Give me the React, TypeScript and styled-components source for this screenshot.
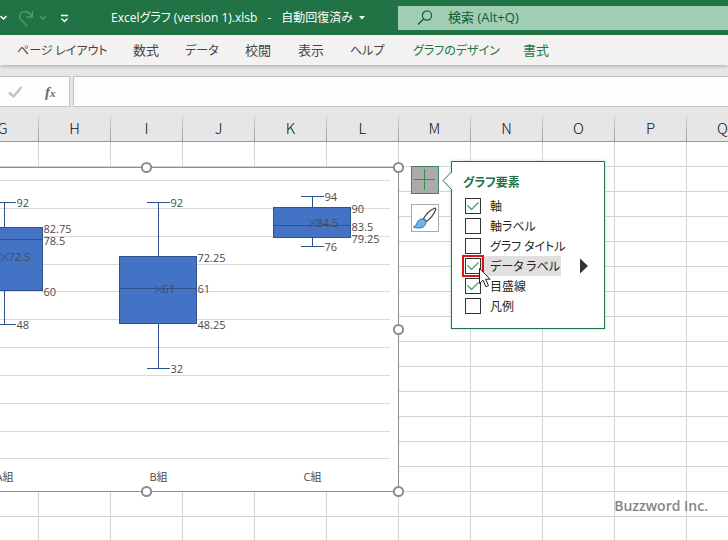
import React from "react";
import styled, { createGlobalStyle } from "styled-components";

const green = "#217346";
const uiFont = `"Open Sans", "Noto Sans CJK JP", sans-serif`;
const jpFont = `"Noto Sans CJK JP", sans-serif`;

const GlobalStyle = createGlobalStyle`
  *, *::before, *::after { box-sizing: border-box; }
  html, body, #root { height: 100%; }
  body { margin: 0; overflow: hidden; background: #fff; font-family: ${uiFont}; font-size: 12px; }
  button, input { font: inherit; }
`;

const Page = styled.div`
  display: flex;
  flex-direction: column;
  min-height: 100vh;
  overflow: hidden;
`;

const TitleBar = styled.header`
  display: grid;
  grid-template-columns: 111px 287px minmax(0, 1fr);
  align-items: center;
  height: 35px;
  background: ${green};
  color: #fff;
`;

const PlainButton = styled.button`
  display: flex;
  align-items: center;
  padding: 0;
  border: 0;
  background: none;
  color: inherit;
  white-space: pre;
`;

const QuickAccess = styled.div`
  display: flex;
  align-items: center;
`;

const FileName = styled(PlainButton)`
  gap: 10px;
  font-size: 12px;
  line-height: 20px;
  span:first-child { font-feature-settings: "palt"; }
  svg { margin-left: -4px; }
`;

const SearchBox = styled.label`
  display: flex;
  align-items: center;
  gap: 14px;
  height: 24px;
  padding-left: 19px;
  background: #a0ceb4;
  color: #0e5c35;
`;

const SearchInput = styled.input`
  flex: 1;
  min-width: 0;
  height: 24px;
  padding: 0 0 2px;
  border: 0;
  outline: 0;
  background: none;
  font-size: 13px;
  color: #0e5c35;
  &::placeholder { color: #0e5c35; opacity: 1; }
`;

const Ribbon = styled.nav`
  position: relative;
  z-index: 1;
  display: grid;
  grid-template-columns: 116px 52px 60px 53px 52px 63px 110px auto;
  justify-content: start;
  align-items: center;
  height: 30px;
  padding-left: 17px;
  background: #f3f2f1;
  box-shadow: 0 3px 3px -1px #bdb9b9;
`;

const Tab = styled(PlainButton)<{ $contextual: boolean; $compact: boolean }>`
  font-family: ${jpFont};
  font-size: ${(p) => (p.$compact ? 12 : 13)}px;
  line-height: 20px;
  font-feature-settings: "palt";
  color: ${(p) => (p.$contextual ? green : "#444")};
`;

const FormulaBar = styled.div`
  display: flex;
  gap: 3px;
  height: 51px;
  padding: 11px 0 9px;
  background: #e6e6e6;
`;

const FormulaTools = styled.div`
  display: flex;
  align-items: center;
  gap: 22px;
  width: 70px;
  padding-left: 8px;
  border: 1px solid #c3c3c3;
  border-left: 0;
  background: #fdfdfd;
`;

const FxButton = styled(PlainButton)`
  font: italic bold 15px/20px "Liberation Serif", serif;
  color: #6a6a6a;
  small { font-size: 11px; line-height: 12px; padding-top: 3px; }
`;

const FormulaInput = styled.input`
  flex: 1;
  min-width: 0;
  border: 1px solid #c3c3c3;
  border-right: 0;
  outline: 0;
  background: #fdfdfd;
`;

const ColumnHeaders = styled.div`
  display: flex;
  height: 26px;
  margin-left: -33px;
  background: #e6e6e6;
  border-bottom: 1px solid #999;
`;

const ColumnHeader = styled.div`
  flex: 0 0 72px;
  border-right: 1px solid;
  border-image: linear-gradient(#d6d6d6, #999) 1;
  text-align: center;
  font: 300 15px/24px ${jpFont};
  color: #111;
`;

const Sheet = styled.main`
  position: relative;
  flex: 1;
  background-color: #fff;
  background-image: linear-gradient(to right, #d4d4d4 1px, transparent 1px),
    linear-gradient(to bottom, #d4d4d4 1px, transparent 1px);
  background-size: 72px 25px;
  background-position: 38px 24px;
`;

const ChartObject = styled.svg`
  position: absolute;
  left: 0;
  top: 18px;
  font-family: ${uiFont};
  font-size: 11px;
`;

const ChartButtons = styled.div`
  position: absolute;
  left: 411px;
  top: 24px;
  display: flex;
  flex-direction: column;
  gap: 10px;
`;

const ChartButton = styled.button<{ $active?: boolean }>`
  display: block;
  width: 28px;
  height: 28px;
  padding: 0;
  border: 1px solid ${(p) => (p.$active ? "#3f8560" : "#ababab")};
  background: ${(p) => (p.$active ? "#ababab" : "#fff")};
  svg { display: block; }
`;

const Flyout = styled.section`
  position: absolute;
  left: 451px;
  top: 19px;
  width: 154px;
  padding: 10px 11px 12px;
  border: 1px solid ${green};
  background: #fff;
  box-shadow: 0 0 3px #b5dcc6;
`;

const FlyoutNotch = styled.svg`
  position: absolute;
  left: -10px;
  top: 9px;
`;

const FlyoutTitle = styled.h2`
  margin: 0 0 4px;
  font: 700 12px/20px ${jpFont};
  font-feature-settings: "palt";
  color: ${green};
`;

const Option = styled.div`
  display: flex;
  align-items: center;
  justify-content: space-between;
  height: 20px;
  padding: 0 5px 0 2px;
`;

const OptionLabel = styled.label<{ $hot?: boolean }>`
  display: flex;
  align-items: center;
  gap: 9px;
  width: 96px;
  height: 20px;
  background: linear-gradient(${(p) => (p.$hot ? "#e1dfe0, #e1dfe0" : "#fff, #fff")}) right / 80px 20px no-repeat;
  font: 12px/20px ${jpFont};
  font-feature-settings: "palt";
  color: #262626;
  white-space: nowrap;
`;

const Box = styled.span<{ $marked?: boolean }>`
  position: relative;
  display: grid;
  width: 16px;
  height: 16px;
  flex: none;
  > * { grid-area: 1 / 1; }
  svg { pointer-events: none; }
  &::after {
    content: "";
    display: ${(p) => (p.$marked ? "block" : "none")};
    position: absolute;
    inset: -3px;
    border: 2px solid #d8151b;
  }
`;

const CheckInput = styled.input`
  appearance: none;
  width: 16px;
  height: 16px;
  margin: 0;
  border: 1px solid #333;
  background: #fdfdfd;
`;

const Pointer = styled.svg`
  position: absolute;
  left: 478px;
  top: 125px;
  pointer-events: none;
`;

const Watermark = styled.footer`
  position: absolute;
  right: 20px;
  bottom: 24px;
  font: 600 14px/20px "Open Sans", sans-serif;
  color: #858585;
`;

const tabs = [
  { label: "ページ レイアウト", compact: true },
  { label: "数式" },
  { label: "データ", compact: true },
  { label: "校閲" },
  { label: "表示" },
  { label: "ヘルプ", compact: true },
  { label: "グラフのデザイン", compact: true, contextual: true },
  { label: "書式", contextual: true },
];
const columns = "GHIJKLMNOPQRSTUVWXYZ".split("");

const options = [
  { label: "軸", checked: true },
  { label: "軸ラベル", checked: false },
  { label: "グラフ タイトル", checked: false },
  { label: "データ ラベル", checked: true, hot: true },
  { label: "目盛線", checked: true },
  { label: "凡例", checked: false },
];

type Plot = {
  name: string;
  x: number;
  max: [number, string];
  q3: [number, string, number];
  median: [number, string, number];
  q1: [number, string, number];
  min: [number, string];
  mean: [number, string];
};

/* Vertical positions are in chart units; the third value is the label's centre. */
const plots: Plot[] = [
  { name: "A組", x: 4, max: [42, "92"], q3: [67, "82.75", 69], median: [79, "78.5", 81], q1: [130, "60", 132], min: [164, "48"], mean: [97, "72.5"] },
  { name: "B組", x: 158, max: [42, "92"], q3: [96, "72.25", 98], median: [128, "61", 129], q1: [163, "48.25", 165], min: [208, "32"], mean: [129, "61"] },
  { name: "C組", x: 312, max: [36, "94"], q3: [47, "90", 49], median: [65, "83.5", 67], q1: [77, "79.25", 79], min: [86, "76"], mean: [63, "84.5"] },
];

const gridLines = [20, 48, 76, 104, 131, 159, 187, 215, 243, 271, 298];
const handles = [[146, 7], [398, 7], [398, 169], [146, 331], [398, 331]];

function BoxPlot({ p }: { p: Plot }) {
  const c = p.x + 0.5;
  return (
    <g>
      <g stroke="#2f528f" fill="none" shapeRendering="crispEdges">
        <path d={`M${c} ${p.max[0]}V${p.q3[0] + 1}M${c} ${p.q1[0] + 1}V${p.min[0]}M${c - 12} ${p.max[0] + 0.5}h23M${c - 12} ${p.min[0] + 0.5}h23`} />
        <rect x={c - 39} y={p.q3[0] + 0.5} width="77" height={p.q1[0] - p.q3[0]} fill="#4472c4" />
        <path d={`M${c - 39} ${p.median[0] + 0.5}h77`} />
      </g>
      <path d={`M${c - 4} ${p.mean[0] - 4}l8 8m0 -8l-8 8`} stroke="#2f528f" fill="none" />
      <g fill="#4a4a4a">
        <text x={c + 12} y={p.max[0] + 5}>{p.max[1]}</text>
        <text x={c + 12} y={p.min[0] + 5}>{p.min[1]}</text>
        <text x={c + 4} y={p.mean[0] + 4}>{p.mean[1]}</text>
        {[p.q3, p.median, p.q1].map(([, label, y]) => (
          <text key={label} x={c + 39} y={y + 4}>{label}</text>
        ))}
        <text x={c} y="321" textAnchor="middle">{p.name}</text>
      </g>
    </g>
  );
}

function Chart() {
  return (
    <ChartObject width="406" height="340" viewBox="0 0 406 340" role="img" aria-label="箱ひげ図">
      <path d="M-1 7.5H398.5V331.5H-1Z" fill="#fff" stroke="#8c8c8c" shapeRendering="crispEdges" />
      {gridLines.map((y) => (
        <path key={y} d={`M0 ${y + 0.5}H390`} stroke="#d9d9d9" shapeRendering="crispEdges" />
      ))}
      {plots.map((p) => <BoxPlot key={p.name} p={p} />)}
      {handles.map(([x, y]) => (
        <circle key={`${x}-${y}`} cx={x + 0.5} cy={y + 0.5} r="4.6" fill="#fff" stroke="#8c8c8c" strokeWidth="2" />
      ))}
    </ChartObject>
  );
}

export default function App() {
  return (
    <>
      <GlobalStyle />
      <Page>
        <TitleBar>
          <QuickAccess>
            <PlainButton aria-label="元に戻す">
              <svg width="17" height="20" fill="none" stroke="#fff" strokeWidth="1.5">
                <path d="M0.5 8l3 3l3 -3" />
              </svg>
            </PlainButton>
            <PlainButton aria-label="やり直し">
              <svg width="42" height="20" fill="none" stroke="#4f9a70" strokeWidth="1.3">
                <path d="M15.5 3v6h-6M15 8.5C12 3 5 2 3 6.5C1.5 10 5 12.5 10.5 18.5M23 8l3 3l3 -3" />
              </svg>
            </PlainButton>
            <PlainButton aria-label="クイック アクセス ツール バーのユーザー設定">
              <svg width="14" height="20" fill="none" stroke="#fff" strokeWidth="1.3">
                <path d="M2 7.5h7M2.5 10.5l3 3l3 -3" />
              </svg>
            </PlainButton>
          </QuickAccess>
          <FileName>
            <span>Excelグラフ (version 1).xlsb</span>
            <span>-</span>
            <span>自動回復済み</span>
            <svg width="6" height="4"><path d="M0 0h6l-3 3.5z" fill="#fff" /></svg>
          </FileName>
          <SearchBox>
            <svg width="17" height="17" fill="none" stroke="#0e5c35" strokeWidth="1.2">
              <circle cx="10" cy="6.5" r="4.6" />
              <path d="M6.5 10L1 15.5" />
            </svg>
            <SearchInput type="search" aria-label="検索" placeholder="検索 (Alt+Q)" />
          </SearchBox>
        </TitleBar>

        <Ribbon>
          {tabs.map((t) => (
            <Tab key={t.label} $contextual={!!t.contextual} $compact={!!t.compact}>{t.label}</Tab>
          ))}
        </Ribbon>

        <FormulaBar>
          <FormulaTools>
            <PlainButton aria-label="入力">
              <svg width="15" height="14" fill="none" stroke="#c2c2c2" strokeWidth="2.4">
                <path d="M1 7.5l4.5 4L13.5 2" />
              </svg>
            </PlainButton>
            <FxButton aria-label="関数の挿入">f<small>x</small></FxButton>
          </FormulaTools>
          <FormulaInput aria-label="数式バー" />
        </FormulaBar>

        <ColumnHeaders>
          {columns.map((c) => <ColumnHeader key={c}>{c}</ColumnHeader>)}
        </ColumnHeaders>

        <Sheet>
          <Chart />
          <ChartButtons>
            <ChartButton $active aria-label="グラフ要素">
              <svg width="26" height="26" stroke="#2f9152" shapeRendering="crispEdges">
                <path d="M12.5 2v21M2 12.5h21" />
              </svg>
            </ChartButton>
            <ChartButton aria-label="グラフ スタイル">
              <svg width="26" height="26">
                <path d="M11.5 13.5C14 9.5 19 4.5 22.5 3.2C23.8 3 24 3.8 23.6 4.8C22 9 18 14 14.5 16.5Z" fill="#fff" stroke="#444" strokeWidth="1.2" />
                <path d="M1.5 22C5 20.5 4.5 18 6.5 15.5C8.5 13.5 12 13.5 13.5 15.8C14.5 18.5 13 21.5 10 22.5C7 23.3 4 23 1.5 22Z" fill="#6db5ea" stroke="#1d6fb8" />
              </svg>
            </ChartButton>
          </ChartButtons>

          <Flyout>
            <FlyoutNotch width="11" height="20">
              <path d="M10.5 0.5L1 9.5L10.5 19" fill="#fff" />
              <path d="M9.5 0.5V1L1 9.5L9.5 18.5" fill="none" stroke={green} />
            </FlyoutNotch>
            <FlyoutTitle>グラフ要素</FlyoutTitle>
            {options.map((o) => (
              <Option key={o.label}>
                <OptionLabel $hot={o.hot}>
                  <Box $marked={o.hot}>
                    <CheckInput type="checkbox" defaultChecked={o.checked} />
                    {o.checked && (
                      <svg width="16" height="16" fill="none" stroke="#3f9d63" strokeWidth="1.2">
                        <path d="M2.5 7.5l4 4L13.5 4.5" />
                      </svg>
                    )}
                  </Box>
                  {o.label}
                </OptionLabel>
                {o.hot && (
                  <PlainButton aria-label="データ ラベルのオプション">
                    <svg width="8" height="16"><path d="M0 0.5L8 8L0 15.5z" fill="#333" /></svg>
                  </PlainButton>
                )}
              </Option>
            ))}
          </Flyout>

          <Pointer width="14" height="22">
            <path d="M1.5 1.5V16.5L5 13.2L8 19.8L10.5 18.6L7.6 12.2H12.2Z" fill="#fff" stroke="#222" />
          </Pointer>
          <Watermark>Buzzword Inc.</Watermark>
        </Sheet>
      </Page>
    </>
  );
}
